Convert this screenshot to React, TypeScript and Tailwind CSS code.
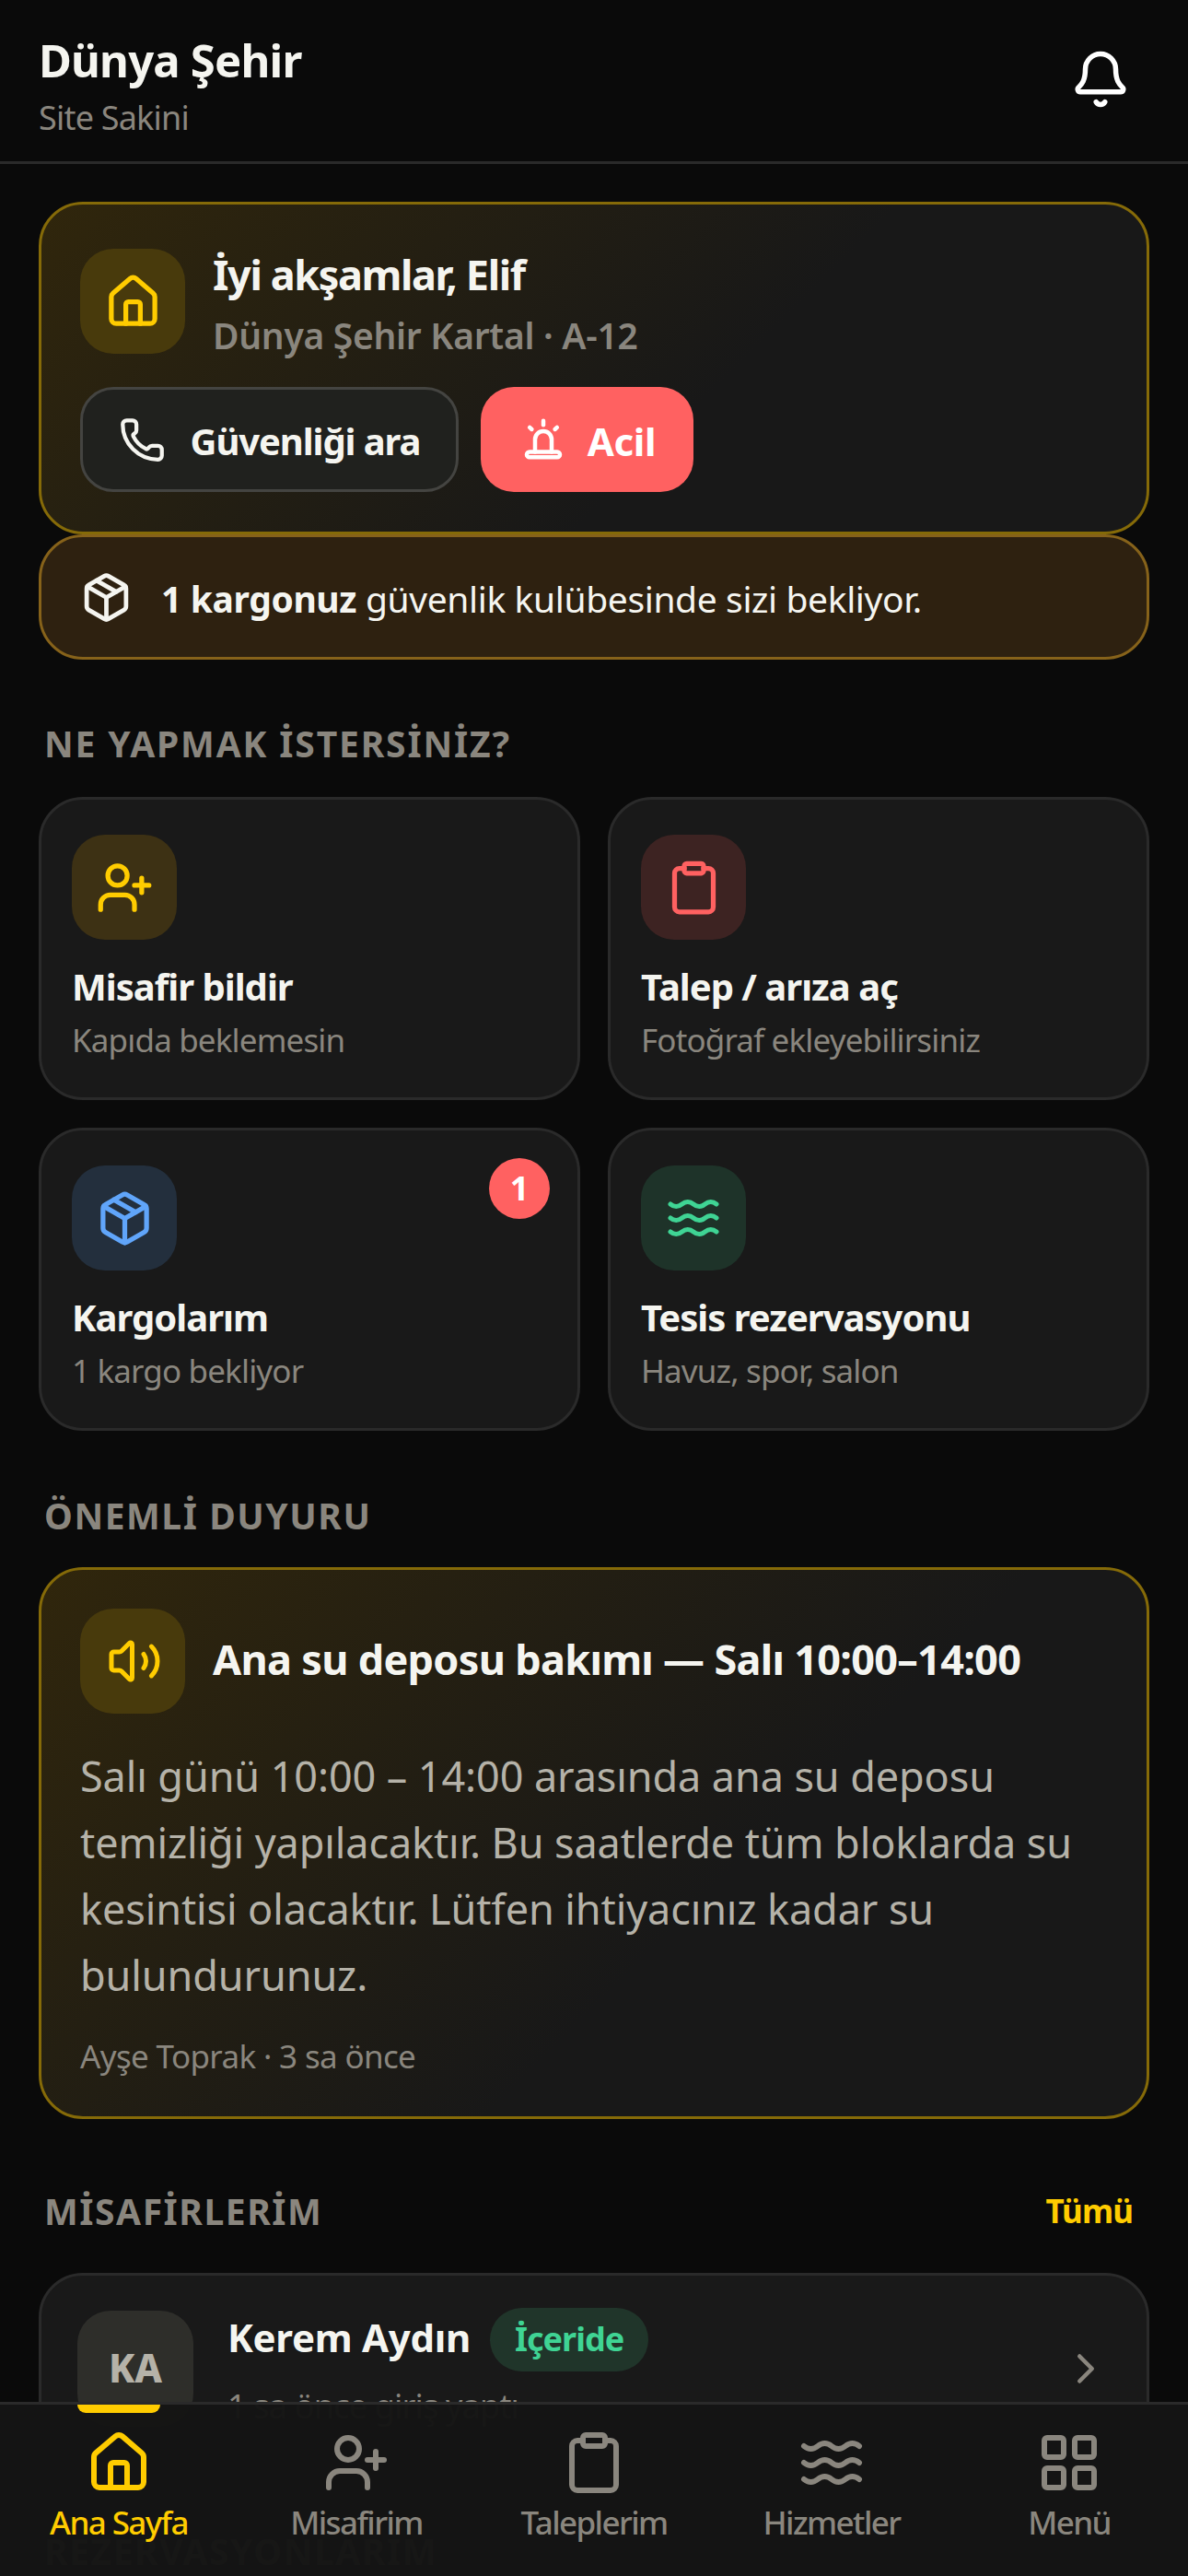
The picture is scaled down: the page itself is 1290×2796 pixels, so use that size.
import React from "react";
import { Bell, Phone, Package, UserPlus, Clipboard, Waves, Volume2, House, LayoutGrid, ChevronRight } from "lucide-react";

function SectionTitle({ children, wide }: { children: React.ReactNode; wide?: boolean }) {
  return (
    <h2
      className={`text-[39px] leading-[58px] font-bold text-[#8a867e] pl-[6px] ${wide ? "tracking-[1.85px]" : "tracking-[1.55px]"}`}
    >
      {children}
    </h2>
  );
}

function SirenIcon({ size }: { size: number }) {
  return (
    <svg
      width={size}
      height={size}
      viewBox="0 0 24 24"
      fill="none"
      stroke="currentColor"
      strokeWidth={2}
      strokeLinecap="round"
      strokeLinejoin="round"
    >
      <path d="M12 3v2" />
      <path d="M5.4 6.2l1 .9" />
      <path d="M18.6 6.2l-1 .9" />
      <path d="M8 18v-6a4 4 0 0 1 8 0v6" />
      <rect x="4" y="18" width="16" height="2.6" rx="1.3" />
    </svg>
  );
}

type ActionProps = {
  icon: React.ReactNode;
  tint: string;
  title: string;
  sub: string;
  badge?: string;
};

function Action({ icon, tint, title, sub, badge }: ActionProps) {
  return (
    <div className="relative h-[329px] rounded-[48px] border-[3px] border-[#2a2a2a] bg-[#191919] pl-[33px] pt-[38px]">
      <div className={`w-[114px] h-[114px] rounded-[36px] flex items-center justify-center ${tint}`}>{icon}</div>
      <div className="mt-[21px] text-[40px] leading-[60px] font-bold text-[#f5f5f0] tracking-[-1px]">{title}</div>
      <div className="mt-[2px] text-[35px] leading-[52px] text-[#8a867e] tracking-[-0.85px]">{sub}</div>
      {badge && (
        <div className="absolute top-[30px] right-[30px] w-[66px] h-[66px] rounded-full bg-[#ff6161] flex items-center justify-center text-[36px] font-bold text-white">
          {badge}
        </div>
      )}
    </div>
  );
}

function NavItem({ icon, label, active }: { icon: React.ReactNode; label: string; active?: boolean }) {
  return (
    <div className={`relative flex flex-col items-center pt-[27px] ${active ? "text-[#ffcc00]" : "text-[#8a867e]"}`}>
      {active && <div className="absolute top-0 w-[90px] h-[9px] rounded-b-[9px] bg-[#ffcc00]" />}
      {icon}
      <div className="mt-[3px] text-[35px] leading-[52px] font-medium tracking-[-1.6px]">{label}</div>
    </div>
  );
}

export default function App() {
  return (
    <div className="relative w-[1290px] h-[2796px] overflow-hidden bg-[#0a0a0a] font-['Noto_Sans','Open_Sans','Liberation_Sans',sans-serif]">
      <header className="h-[178px] border-b-[3px] border-[#2a2a2a] px-[42px] flex items-start justify-between">
        <div className="pt-[32px]">
          <div className="text-[49px] leading-[66px] font-bold text-[#f5f5f0] tracking-[-0.8px]">Dünya Şehir</div>
          <div className="text-[36px] leading-[52px] mt-[4px] text-[#8a867e] tracking-[-0.8px]">Site Sakini</div>
        </div>
        <div className="pt-[53px] pr-[20px] text-white">
          <Bell size={66} strokeWidth={2} />
        </div>
      </header>

      <main className="px-[42px] pt-[41px]">
        <section className="h-[361px] rounded-[48px] border-[3px] border-[#856a08] bg-[linear-gradient(135deg,#30260c_0%,#181818_60%)] px-[42px] pt-[48px]">
          <div className="flex items-start gap-[30px] h-[114px]">
            <div className="w-[114px] h-[114px] rounded-[36px] bg-[#483a0c] flex items-center justify-center text-[#ffcc00]">
              <House size={63} strokeWidth={2} />
            </div>
            <div>
              <div className="text-[45px] leading-[56px] font-bold text-[#f5f5f0] tracking-[-1.4px]">İyi akşamlar, Elif</div>
              <div className="text-[39px] leading-[54px] mt-[11px] font-semibold text-[#8a867e] tracking-[-0.3px]">
                Dünya Şehir Kartal · A-12
              </div>
            </div>
          </div>
          <div className="mt-[36px] flex gap-[24px]">
            <div className="h-[114px] w-[411px] rounded-[36px] border-[3px] border-[#444441] bg-[#20211e] flex items-center justify-center gap-[27px] text-[#f5f5f0]">
              <Phone size={51} strokeWidth={2} />
              <span className="pt-[4px] text-[40px] font-bold tracking-[-1.1px]">Güvenliği ara</span>
            </div>
            <div className="h-[114px] w-[231px] rounded-[36px] bg-[#ff6161] flex items-center justify-center gap-[21px] text-white">
              <SirenIcon size={54} />
              <span className="pt-[2px] text-[42px] font-bold tracking-[-0.3px]">Acil</span>
            </div>
          </div>
        </section>

        <section className="h-[136px] rounded-[48px] border-[3px] border-[#86621a] bg-[#2e2110] pl-[42px] flex items-center gap-[31px] text-[#f5f5f0]">
          <Package size={57} strokeWidth={2} />
          <div className="text-[39px] pt-[5px] tracking-[-0.38px]">
            <b className="font-bold">1 kargonuz</b> güvenlik kulübesinde sizi bekliyor.
          </div>
        </section>

        <div className="mt-[62px] mb-[29px]">
          <SectionTitle wide>NE YAPMAK İSTERSİNİZ?</SectionTitle>
        </div>

        <div className="grid grid-cols-2 gap-[30px]">
          <Action
            tint="bg-[#3d3114]"
            icon={<UserPlus size={63} strokeWidth={2} className="text-[#ffcc00]" />}
            title="Misafir bildir"
            sub="Kapıda beklemesin"
          />
          <Action
            tint="bg-[#3d2322]"
            icon={<Clipboard size={63} strokeWidth={2} className="text-[#ff6161]" />}
            title="Talep / arıza aç"
            sub="Fotoğraf ekleyebilirsiniz"
          />
          <Action
            tint="bg-[#232f3d]"
            icon={<Package size={63} strokeWidth={2} className="text-[#60a5fa]" />}
            title="Kargolarım"
            sub="1 kargo bekliyor"
            badge="1"
          />
          <Action
            tint="bg-[#1e3329]"
            icon={<Waves size={60} strokeWidth={2} className="text-[#3fd494]" />}
            title="Tesis rezervasyonu"
            sub="Havuz, spor, salon"
          />
        </div>

        <div className="mt-[63px] mb-[27px]">
          <SectionTitle>ÖNEMLİ DUYURU</SectionTitle>
        </div>

        <section className="h-[599px] rounded-[48px] border-[3px] border-[#856a08] bg-[linear-gradient(135deg,#30260c_0%,#181818_60%)] px-[42px] pt-[42px]">
          <div className="flex items-center gap-[30px]">
            <div className="w-[114px] h-[114px] pl-[3px] rounded-[36px] bg-[#483a0c] flex items-center justify-center text-[#ffcc00]">
              <Volume2 size={60} strokeWidth={2} />
            </div>
            <div className="mb-[5px] text-[45px] font-bold text-[#f5f5f0] tracking-[-0.7px]">
              Ana su deposu bakımı — Salı 10:00–14:00
            </div>
          </div>
          <p className="mt-[32px] text-[45px] leading-[72px] text-[#b5b2a8] tracking-[-0.1px]">
            Salı günü 10:00 – 14:00 arasında ana su deposu temizliği yapılacaktır. Bu saatlerde tüm bloklarda su kesintisi
            olacaktır. Lütfen ihtiyacınız kadar su bulundurunuz.
          </p>
          <div className="mt-[25px] text-[35px] leading-[54px] text-[#8a867e] tracking-[-0.65px]">Ayşe Toprak · 3 sa önce</div>
        </section>

        <div className="mt-[71px] mb-[38px] flex items-center justify-between pr-[18px]">
          <SectionTitle>MİSAFİRLERİM</SectionTitle>
          <span className="text-[35px] font-bold text-[#ffcc00] tracking-[-0.9px]">Tümü</span>
        </div>

        <section className="h-[208px] rounded-[48px] border-[3px] border-[#2a2a2a] bg-[#191919] pl-[39px] pr-[39px] flex items-center gap-[37px]">
          <div className="w-[126px] h-[126px] rounded-[36px] bg-[#2e2e2a] flex items-center justify-center text-[42px] pb-[3px] font-extrabold text-[#b5b2a8]">
            KA
          </div>
          <div className="flex-1">
            <div className="flex items-center gap-[21px]">
              <span className="pb-[6px] text-[42px] font-bold text-[#f5f5f0] tracking-[-0.3px]">Kerem Aydın</span>
              <span className="h-[69px] px-[27px] rounded-full bg-[#20352a] flex items-center text-[36px] font-bold text-[#3fd494] tracking-[-1px]">
                İçeride
              </span>
            </div>
            <div className="mt-[12px] text-[36px] leading-[52px] text-[#8a867e] tracking-[-0.8px]">1 sa önce giriş yaptı</div>
          </div>
          <ChevronRight size={54} strokeWidth={2} className="text-[#8a867e]" />
        </section>

        <div className="mt-[65px]">
          <SectionTitle>REZERVASYONLARIM</SectionTitle>
        </div>
      </main>

      <nav className="absolute left-0 right-0 top-[2607px] bottom-0 border-t-[3px] border-[#2a2a2a] bg-[#141414]/98 grid grid-cols-5">
        <NavItem active icon={<House size={72} strokeWidth={2} />} label="Ana Sayfa" />
        <NavItem icon={<UserPlus size={72} strokeWidth={2} />} label="Misafirim" />
        <NavItem icon={<Clipboard size={72} strokeWidth={2} />} label="Taleplerim" />
        <NavItem icon={<Waves size={72} strokeWidth={2} />} label="Hizmetler" />
        <NavItem icon={<LayoutGrid size={72} strokeWidth={2} />} label="Menü" />
      </nav>
    </div>
  );
}
